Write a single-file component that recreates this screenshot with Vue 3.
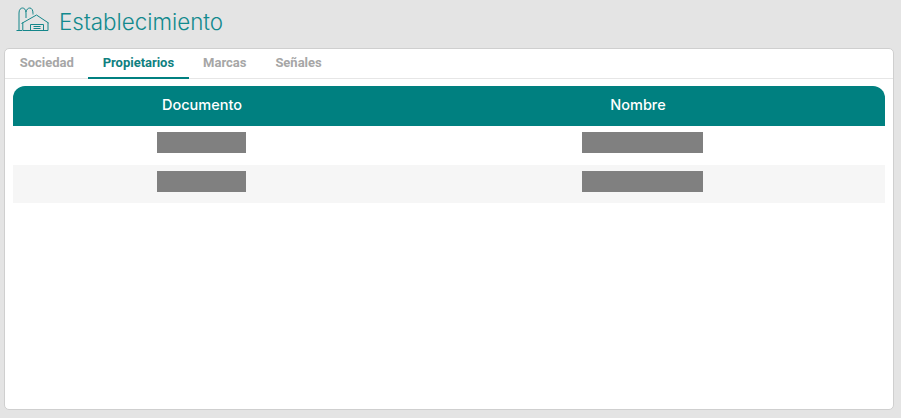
<template>
  <div class="page">
    <header class="title-bar">
      <svg class="title-icon" width="34" height="28" viewBox="0 0 34 28" fill="none" stroke="#14868a" stroke-width="1">
        <path d="M0.5 25.5H6.5M3 25V8C3 4.5 4.8 3 6.5 3S10 4.5 10 8V13" />
        <path d="M6.8 25V17.5M10 7C10.5 4.5 12 3 13.8 3S17 4.8 17 8.5V9.5" />
        <path d="M5.5 18.5L20.5 10L32.5 18M7 25.5H32V17.5" />
        <path d="M14.5 25V19.5H27.5V25M17.5 21.5H24.5M17.5 23.5H24.5" />
      </svg>
      <h1 class="title">Establecimiento</h1>
    </header>

    <section class="card">
      <nav class="tabs">
        <a
          v-for="tab in tabs"
          :key="tab"
          class="tab"
          :class="{ active: tab === activeTab }"
        >{{ tab }}</a>
      </nav>

      <div class="table">
        <div class="table-head">
          <div class="cell">Documento</div>
          <div class="cell">Nombre</div>
        </div>
        <div v-for="row in rows" :key="row" class="table-row">
          <div class="cell"><span class="redacted doc"></span></div>
          <div class="cell"><span class="redacted name"></span></div>
        </div>
      </div>
    </section>
  </div>
</template>

<script setup>
import { ref } from 'vue'

const tabs = ['Sociedad', 'Propietarios', 'Marcas', 'Señales']
const activeTab = ref('Propietarios')
const rows = [1, 2]
</script>

<style>
html,
body {
  margin: 0;
  background: #e4e4e4;
}
</style>

<style scoped>
.page {
  width: 901px;
  height: 418px;
  box-sizing: border-box;
  padding: 0 7px 8px 4px;
  display: flex;
  flex-direction: column;
  overflow: hidden;
}

.title-bar {
  height: 48px;
  display: flex;
  align-items: center;
  padding: 0 0 6px 12px;
  box-sizing: border-box;
}

.title-icon {
  margin: 0 9px 4px 0;
}

.title {
  margin: 0;
  font-family: Inter, sans-serif;
  font-weight: 300;
  font-size: 22.4px;
  color: #138a8e;
}

.card {
  flex: 1;
  background: #fff;
  border: 1px solid #cfcfcf;
  border-radius: 5px;
}

.tabs {
  display: flex;
  height: 29px;
  padding-left: 0.2px;
  border-bottom: 1px solid #e6e6e6;
}

.tab {
  padding: 0 14.5px;
  height: 29px;
  line-height: 27px;
  font-family: Roboto, sans-serif;
  font-weight: 700;
  font-size: 13px;
  letter-spacing: -0.02px;
  color: #a6a6a6;
}

.tab.active {
  color: #0f8080;
  border-bottom: 2px solid #008080;
  height: 28px;
}

.table {
  margin: 7px 8px 0;
}

.table-head,
.table-row {
  display: grid;
  grid-template-columns: 378px 1fr;
}

.table-head {
  height: 40px;
  box-sizing: border-box;
  padding-bottom: 3px;
  align-items: center;
  background: #008080;
  border-radius: 12px 12px 0 0;
  color: #fff;
  font-family: Inter, sans-serif;
  font-weight: 500;
  font-size: 14.5px;
}

.table-row {
  height: 39px;
  box-sizing: border-box;
  padding-top: 6px;
}

.table-row:nth-child(odd) {
  background: #f6f6f6;
  height: 38px;
}

.cell {
  display: flex;
  justify-content: center;
}

.redacted {
  display: block;
  height: 21px;
  background: #808080;
}

.redacted.doc {
  width: 89px;
  margin-right: 2px;
}

.redacted.name {
  width: 121px;
  margin-left: 8px;
}
</style>
